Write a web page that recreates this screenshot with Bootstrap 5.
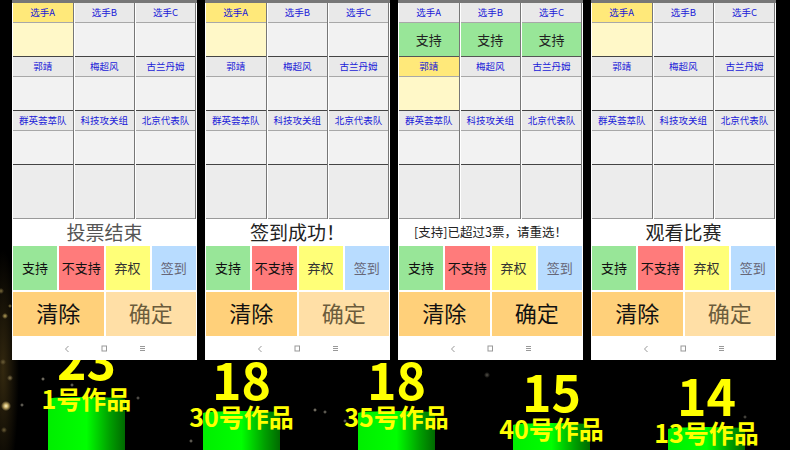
<!DOCTYPE html>
<html lang="zh">
<head>
<meta charset="utf-8">
<title>投票</title>
<link href="https://cdn.jsdelivr.net/npm/bootstrap@5.3.0/dist/css/bootstrap.min.css" rel="stylesheet">
<style>
html,body{margin:0;height:455px;overflow:hidden;background:#fff;}
.scene{height:450px;width:790px;overflow:hidden;color:#000;background-color:#000;font-family:"Noto Sans CJK SC","Liberation Sans",sans-serif;
background-image:
radial-gradient(circle at 6px 406px,#fff6c8 0,#c9b06a 2px,transparent 5px),
radial-gradient(circle at 10px 378px,#8a7a50 0,transparent 3px),
radial-gradient(circle at 3px 362px,#6d5f38 0,transparent 3px),
radial-gradient(circle at 10px 306px,#8a7a40 0,transparent 2px),
radial-gradient(circle at 5px 316px,#b8a25a 0,transparent 3px),
radial-gradient(circle at 1px 291px,#7d6d3c 0,transparent 3px),
radial-gradient(circle at 4px 430px,#6d5f38 0,transparent 3px),
radial-gradient(circle at 43px 379px,#a9a290 0,transparent 2px),
radial-gradient(circle at 22px 405px,#8d887c 0,transparent 2px),
radial-gradient(circle at 72px 385px,#8d887c 0,transparent 2px),
radial-gradient(circle at 138px 398px,#77736a 0,transparent 2px),
radial-gradient(circle at 315px 410px,#a9a290 0,transparent 2px),
radial-gradient(circle at 325px 412px,#8d887c 0,transparent 2px),
radial-gradient(circle at 345px 421px,#8d887c 0,transparent 2px),
radial-gradient(circle at 191px 441px,#8d887c 0,transparent 2px),
radial-gradient(circle at 487px 375px,#55524a 0,transparent 3px),
radial-gradient(circle at 745px 417px,#66635a 0,transparent 2px),
radial-gradient(ellipse 16px 120px at 3px 370px,#33280f 0,transparent 100%);}
.phones{height:360px;padding-left:12px;gap:8px;}
.phone{width:185px;height:360px;background:#fff;position:relative;z-index:2;}
.topline{height:3px;background:#777;}
.vote-grid{display:grid;grid-template-columns:60.5px 60.5px 60px;column-gap:1px;padding-left:1px;}
.vcell{border-right:1px solid #777;}
.vhead{height:20px;background:#e9e9e9;color:#1a1ad8;font-size:9.5px;line-height:19px;text-align:center;border-bottom:1px solid #a8a8a8;}
.vbody{height:34px;background:#f2f2f2;border-bottom:1px solid #444;font-size:13px;line-height:33px;color:#222;text-align:center;}
.vblank{height:54px;background:#ececec;border-bottom:1px solid #999;}
.sel .vhead{background:#ffe97a;}
.sel .vbody{background:#fff8c8;}
.yes .vbody{background:#98e698;border-bottom-color:#555;}
.msg{height:27px;line-height:25px;text-align:center;font-size:19px;color:#222;}
.msg.faded{color:#555;}
.msg.tiny{font-size:12.5px;}
.keys4,.keys2{display:grid;gap:2px;padding:0 1px;}
.keys4{grid-template-columns:repeat(4,1fr);height:44px;margin-bottom:2px;}
.keys2{grid-template-columns:repeat(2,1fr);height:44px;}
.vkey{display:flex;align-items:center;justify-content:center;color:#111;}
.keys4 .vkey{font-size:13px;padding-bottom:1px;}
.keys2 .vkey{font-size:22px;background:#ffd07a;padding-bottom:4px;}
.keys2 .vkey.off{background:#ffdfa6;color:#6b5c3c;}
.k-g{background:#98e698;}.k-r{background:#ff7b7b;}.k-y{background:#ffff78;color:#333!important;}.k-b{background:#b8dcff;color:#667!important;}
.softnav{height:24px;padding-top:1px;}
.softnav svg{display:block;}
.softnav span{width:38px;display:flex;justify-content:center;}
.chart{height:90px;padding-left:9px;}
.entry{width:155px;color:#ff0;font-weight:700;text-align:center;position:relative;z-index:1;}
.num{font-size:50px;line-height:44px;margin-bottom:1px;}
.num.lead-num{margin-bottom:3px;}
.lbl{font-size:25px;line-height:30px;margin-bottom:-20px;position:relative;z-index:1;white-space:nowrap;}
.lbl.lead-lbl{margin-bottom:-16px;}
.cyl{width:77px;margin:0 auto;border-radius:38px 38px 0 0 / 2px;background:linear-gradient(90deg,#00ee00 0,#00ff00 50%,#00a000 80%,#006a00 100%);}
.h1{height:53px;}.h2{height:39px;}.h3{height:27px;}.h4{height:23px;}
</style>
</head>
<body>
<div class="scene">
<div class="phones d-flex">

<div class="phone d-flex flex-column">
<div class="topline"></div>
<div class="vote-grid">
<div class="vcell sel"><div class="vhead">选手A</div><div class="vbody"></div></div><div class="vcell"><div class="vhead">选手B</div><div class="vbody"></div></div><div class="vcell"><div class="vhead">选手C</div><div class="vbody"></div></div>
<div class="vcell"><div class="vhead">郭靖</div><div class="vbody"></div></div><div class="vcell"><div class="vhead">梅超风</div><div class="vbody"></div></div><div class="vcell"><div class="vhead">古兰丹姆</div><div class="vbody"></div></div>
<div class="vcell"><div class="vhead">群英荟萃队</div><div class="vbody"></div></div><div class="vcell"><div class="vhead">科技攻关组</div><div class="vbody"></div></div><div class="vcell"><div class="vhead">北京代表队</div><div class="vbody"></div></div>
<div class="vcell"><div class="vblank"></div></div><div class="vcell"><div class="vblank"></div></div><div class="vcell"><div class="vblank"></div></div>
</div>
<div class="msg faded">投票结束</div>
<div class="keys4"><div class="vkey k-g">支持</div><div class="vkey k-r">不支持</div><div class="vkey k-y">弃权</div><div class="vkey k-b">签到</div></div>
<div class="keys2"><div class="vkey">清除</div><div class="vkey off">确定</div></div>
<div class="softnav d-flex justify-content-center align-items-center"><span><svg width="6" height="8" viewBox="0 0 6 8"><path d="M4.5 1 1.5 4l3 3" fill="none" stroke="#999"/></svg></span><span><svg width="7" height="7" viewBox="0 0 7 7"><rect x="1" y="1" width="4.5" height="5" fill="none" stroke="#999"/></svg></span><span><svg width="7" height="7" viewBox="0 0 7 7"><path d="M1 1.5h5M1 3.5h5M1 5.5h5" stroke="#999" fill="none"/></svg></span></div>
</div>

<div class="phone d-flex flex-column">
<div class="topline"></div>
<div class="vote-grid">
<div class="vcell sel"><div class="vhead">选手A</div><div class="vbody"></div></div><div class="vcell"><div class="vhead">选手B</div><div class="vbody"></div></div><div class="vcell"><div class="vhead">选手C</div><div class="vbody"></div></div>
<div class="vcell"><div class="vhead">郭靖</div><div class="vbody"></div></div><div class="vcell"><div class="vhead">梅超风</div><div class="vbody"></div></div><div class="vcell"><div class="vhead">古兰丹姆</div><div class="vbody"></div></div>
<div class="vcell"><div class="vhead">群英荟萃队</div><div class="vbody"></div></div><div class="vcell"><div class="vhead">科技攻关组</div><div class="vbody"></div></div><div class="vcell"><div class="vhead">北京代表队</div><div class="vbody"></div></div>
<div class="vcell"><div class="vblank"></div></div><div class="vcell"><div class="vblank"></div></div><div class="vcell"><div class="vblank"></div></div>
</div>
<div class="msg">签到成功&#xFF01;</div>
<div class="keys4"><div class="vkey k-g">支持</div><div class="vkey k-r">不支持</div><div class="vkey k-y">弃权</div><div class="vkey k-b">签到</div></div>
<div class="keys2"><div class="vkey">清除</div><div class="vkey off">确定</div></div>
<div class="softnav d-flex justify-content-center align-items-center"><span><svg width="6" height="8" viewBox="0 0 6 8"><path d="M4.5 1 1.5 4l3 3" fill="none" stroke="#999"/></svg></span><span><svg width="7" height="7" viewBox="0 0 7 7"><rect x="1" y="1" width="4.5" height="5" fill="none" stroke="#999"/></svg></span><span><svg width="7" height="7" viewBox="0 0 7 7"><path d="M1 1.5h5M1 3.5h5M1 5.5h5" stroke="#999" fill="none"/></svg></span></div>
</div>

<div class="phone d-flex flex-column">
<div class="topline"></div>
<div class="vote-grid">
<div class="vcell yes"><div class="vhead">选手A</div><div class="vbody">支持</div></div><div class="vcell yes"><div class="vhead">选手B</div><div class="vbody">支持</div></div><div class="vcell yes"><div class="vhead">选手C</div><div class="vbody">支持</div></div>
<div class="vcell sel"><div class="vhead">郭靖</div><div class="vbody"></div></div><div class="vcell"><div class="vhead">梅超风</div><div class="vbody"></div></div><div class="vcell"><div class="vhead">古兰丹姆</div><div class="vbody"></div></div>
<div class="vcell"><div class="vhead">群英荟萃队</div><div class="vbody"></div></div><div class="vcell"><div class="vhead">科技攻关组</div><div class="vbody"></div></div><div class="vcell"><div class="vhead">北京代表队</div><div class="vbody"></div></div>
<div class="vcell"><div class="vblank"></div></div><div class="vcell"><div class="vblank"></div></div><div class="vcell"><div class="vblank"></div></div>
</div>
<div class="msg tiny">[支持]已超过3票&#xFF0C;请重选&#xFF01;</div>
<div class="keys4"><div class="vkey k-g">支持</div><div class="vkey k-r">不支持</div><div class="vkey k-y">弃权</div><div class="vkey k-b">签到</div></div>
<div class="keys2"><div class="vkey">清除</div><div class="vkey">确定</div></div>
<div class="softnav d-flex justify-content-center align-items-center"><span><svg width="6" height="8" viewBox="0 0 6 8"><path d="M4.5 1 1.5 4l3 3" fill="none" stroke="#999"/></svg></span><span><svg width="7" height="7" viewBox="0 0 7 7"><rect x="1" y="1" width="4.5" height="5" fill="none" stroke="#999"/></svg></span><span><svg width="7" height="7" viewBox="0 0 7 7"><path d="M1 1.5h5M1 3.5h5M1 5.5h5" stroke="#999" fill="none"/></svg></span></div>
</div>

<div class="phone d-flex flex-column">
<div class="topline"></div>
<div class="vote-grid">
<div class="vcell sel"><div class="vhead">选手A</div><div class="vbody"></div></div><div class="vcell"><div class="vhead">选手B</div><div class="vbody"></div></div><div class="vcell"><div class="vhead">选手C</div><div class="vbody"></div></div>
<div class="vcell"><div class="vhead">郭靖</div><div class="vbody"></div></div><div class="vcell"><div class="vhead">梅超风</div><div class="vbody"></div></div><div class="vcell"><div class="vhead">古兰丹姆</div><div class="vbody"></div></div>
<div class="vcell"><div class="vhead">群英荟萃队</div><div class="vbody"></div></div><div class="vcell"><div class="vhead">科技攻关组</div><div class="vbody"></div></div><div class="vcell"><div class="vhead">北京代表队</div><div class="vbody"></div></div>
<div class="vcell"><div class="vblank"></div></div><div class="vcell"><div class="vblank"></div></div><div class="vcell"><div class="vblank"></div></div>
</div>
<div class="msg">观看比赛</div>
<div class="keys4"><div class="vkey k-g">支持</div><div class="vkey k-r">不支持</div><div class="vkey k-y">弃权</div><div class="vkey k-b">签到</div></div>
<div class="keys2"><div class="vkey">清除</div><div class="vkey off">确定</div></div>
<div class="softnav d-flex justify-content-center align-items-center"><span><svg width="6" height="8" viewBox="0 0 6 8"><path d="M4.5 1 1.5 4l3 3" fill="none" stroke="#999"/></svg></span><span><svg width="7" height="7" viewBox="0 0 7 7"><rect x="1" y="1" width="4.5" height="5" fill="none" stroke="#999"/></svg></span><span><svg width="7" height="7" viewBox="0 0 7 7"><path d="M1 1.5h5M1 3.5h5M1 5.5h5" stroke="#999" fill="none"/></svg></span></div>
</div>

</div>
<div class="chart d-flex align-items-end">
<div class="entry"><div class="num lead-num">23</div><div class="lbl lead-lbl">1号作品</div><div class="cyl h1"></div></div>
<div class="entry"><div class="num">18</div><div class="lbl">30号作品</div><div class="cyl h2"></div></div>
<div class="entry"><div class="num">18</div><div class="lbl">35号作品</div><div class="cyl h2"></div></div>
<div class="entry"><div class="num">15</div><div class="lbl">40号作品</div><div class="cyl h3"></div></div>
<div class="entry"><div class="num">14</div><div class="lbl">13号作品</div><div class="cyl h4"></div></div>
</div>
</div>
<script src="https://cdn.jsdelivr.net/npm/bootstrap@5.3.0/dist/js/bootstrap.bundle.min.js"></script>
</body>
</html>
